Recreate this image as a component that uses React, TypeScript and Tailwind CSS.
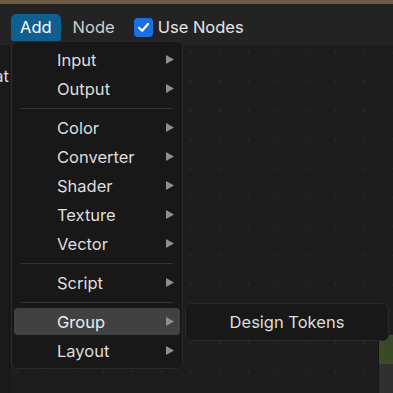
import React from "react";

const Arrow = () => (
  <svg width="8" height="9" viewBox="0 0 8 9" className="shrink-0">
    <polygon points="0,0 8,4.5 0,9" fill="#8f8f8f" />
  </svg>
);

type Item = { label: string; active?: boolean } | "sep";

const items: Item[] = [
  { label: "Input" },
  { label: "Output" },
  "sep",
  { label: "Color" },
  { label: "Converter" },
  { label: "Shader" },
  { label: "Texture" },
  { label: "Vector" },
  "sep",
  { label: "Script" },
  "sep",
  { label: "Group", active: true },
  { label: "Layout" },
];

export default function App() {
  return (
    <div
      className="w-[393px] h-[393px] overflow-hidden flex flex-col bg-[#1d1d1d] text-[#e2e2e2] relative"
      style={{ fontFamily: "Inter, 'Noto Sans', sans-serif" }}
    >
      <div className="h-[4px] bg-[#6e5c45] shrink-0" />
      <div className="h-[41px] bg-[#232323] shrink-0 flex items-end pl-[11px] gap-[2px]">
        <div className="h-[27px] px-[9px] mb-[4px] rounded-t-[5px] rounded-b-[2px] bg-[#0f5f8f] flex items-center text-[16.5px] text-white">
          Add
        </div>
        <div className="h-[27px] px-[10px] mb-[4px] flex items-center text-[16.5px] text-[#d0d0d0]">
          Node
        </div>
        <div className="h-[27px] mb-[4px] ml-[7px] flex items-center gap-[5px] text-[16.5px] text-[#e6e6e6]">
          <div className="w-[19px] h-[19px] rounded-[4px] bg-[#1b6fe3] flex items-center justify-center">
            <svg width="13" height="13" viewBox="0 0 13 13">
              <path d="M2 6.8 L5.2 9.8 L11 3" stroke="white" strokeWidth="2.2" fill="none" strokeLinecap="round" strokeLinejoin="round" />
            </svg>
          </div>
          Use Nodes
        </div>
      </div>
      <div className="flex-1 flex min-h-0">
        <div className="w-[10px] shrink-0 bg-[#1a1a1a] border-r border-[#141414] overflow-hidden flex justify-end pt-[23px]">
          <span className="whitespace-nowrap text-[16.5px] text-[#dcdcdc] leading-none h-[17px]">Flat</span>
        </div>
        <div className="flex-1 relative bg-[#1d1d1d] bg-[radial-gradient(circle,#252525_1px,transparent_1.5px)] bg-[size:29px_29px] bg-[position:-8px_-7px]">
          <div className="absolute right-0 top-[290px] w-[15px] h-[60px] rounded-tl-[4px] overflow-hidden flex flex-col border-l border-[#161616]">
            <div className="h-[29px] bg-[#3b4a26]" />
            <div className="flex-1 bg-[#303030]" />
          </div>
        </div>
      </div>

      {/* menu */}
      <div className="absolute left-[11px] top-[41px] w-[172px] rounded-[6px] bg-[#181818] border border-[#292929] py-[3px] px-[2px] flex flex-col">
        {items.map((it, i) =>
          it === "sep" ? (
            <div key={i} className="h-[10px] flex items-center px-[7px]">
              <div className="h-px w-full bg-[#333333]" />
            </div>
          ) : (
            <div key={i} className="h-[29px] py-px">
              <div
                className={
                  "h-[27px] rounded-[4px] flex items-center pl-[43px] pr-[6px] justify-between text-[16.5px] leading-none " +
                  (it.active ? "bg-[#414141] text-[#ececec]" : "text-[#dedede]")
                }
              >
                <span className="pt-[2px]">{it.label}</span>
                <Arrow />
              </div>
            </div>
          )
        )}
      </div>

      {/* submenu */}
      <div className="absolute left-[185px] top-[303px] w-[204px] h-[38px] rounded-[6px] bg-[#181818] border border-[#292929] flex items-center justify-center text-[16.5px] text-[#dedede]">
        Design Tokens
      </div>
    </div>
  );
}
